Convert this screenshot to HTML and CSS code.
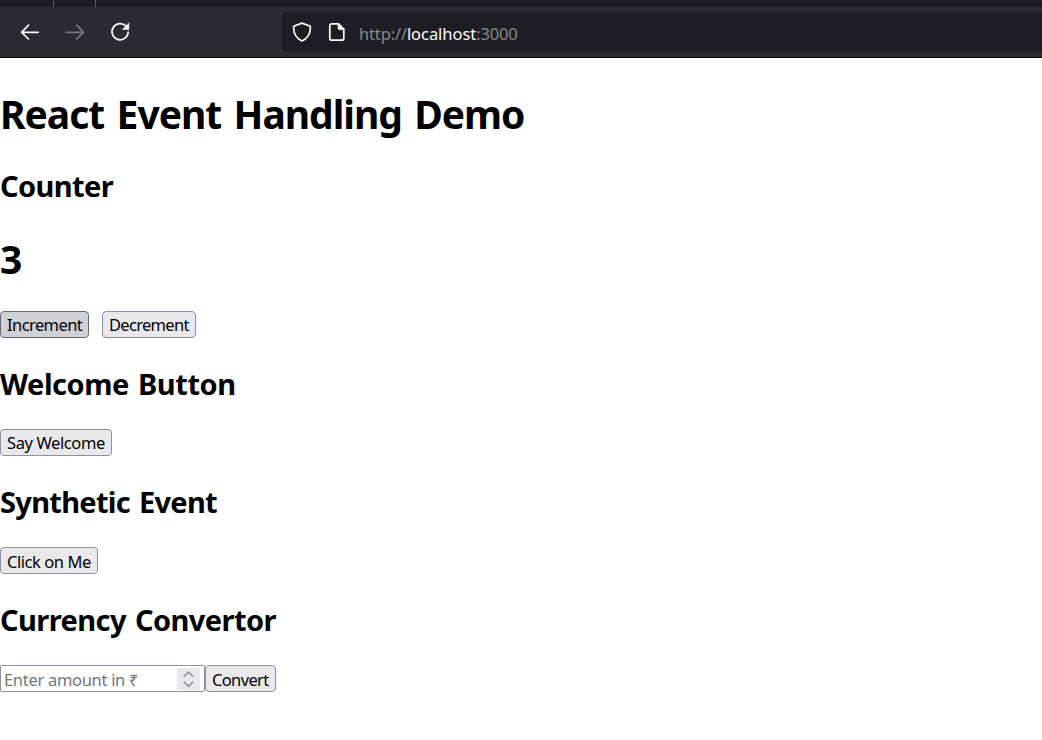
FILE: index.html
```html
<!DOCTYPE html>
<html lang="en">
<head>
<meta charset="utf-8">
<title>React Event Handling Demo</title>
<link rel="stylesheet" href="styles.css">
</head>
<body>
<header class="browser">
  <div class="tabstrip"><span class="tab-first"></span><span class="tab-second"></span></div>
  <div class="toolbar">
    <nav class="nav">
      <svg class="icon" viewBox="0 0 20 20"><path d="M18.2 10.3H1.8M8.5 3.2L1.6 10.3l6.9 6.7"/></svg>
      <svg class="icon icon-disabled" viewBox="0 0 20 20"><path d="M1.2 10.3h17M11.6 3.2l6.9 7.1-6.9 6.7"/></svg>
      <svg class="icon" viewBox="0 0 20 20"><path d="M16.1 4.2A8.1 8.1 0 1 0 18.2 10.2"/><path class="fill" d="M18.9 1v6.5h-6.2z"/></svg>
    </nav>
    <div class="urlbar">
      <svg class="icon" viewBox="0 0 20 20"><path d="M10 1.1L18.3 4.3V7C18.3 12 14.8 17 10 19C5.2 17 1.7 12 1.7 7V4.3z"/></svg>
      <svg class="icon icon-page" viewBox="0 0 20 20"><path d="M4.8 1.8h6.7l5.3 5.3v9.1a2 2 0 0 1-2 2h-10a2 2 0 0 1-2-2V3.8a2 2 0 0 1 2-2z"/><path class="fill" d="M11 1.2l6.5 6.5h-5a1.5 1.5 0 0 1-1.5-1.5z"/></svg>
      <span class="url">http://<b class="host">localhost</b>:3000</span>
    </div>
  </div>
</header>
<main class="page">
  <h1 class="title"><span class="t-title">React Event Handling Demo</span></h1>
  <h2 class="subtitle"><span class="t-counter">Counter</span></h2>
  <h1 class="title count"><span>3</span></h1>
  <div class="row row-gap">
    <button class="btn btn-increment"><span>Increment</span></button>
    <button class="btn btn-decrement"><span>Decrement</span></button>
  </div>
  <h2 class="subtitle"><span class="t-welcome">Welcome Button</span></h2>
  <div class="row"><button class="btn btn-welcome"><span>Say Welcome</span></button></div>
  <h2 class="subtitle"><span class="t-synthetic">Synthetic Event</span></h2>
  <div class="row"><button class="btn btn-click"><span>Click on Me</span></button></div>
  <h2 class="subtitle"><span class="t-currency">Currency Convertor</span></h2>
  <div class="row">
    <div class="amount">
      <span class="placeholder">Enter amount in ₹</span>
      <span class="spinner"><svg viewBox="0 0 23 22"><path d="M7.3 8.2l4.2-4.2 4.2 4.2M7.3 14.2l4.2 4.2 4.2-4.2"/></svg></span>
    </div>
    <button class="btn btn-convert"><span>Convert</span></button>
  </div>
</main>
</body>
</html>
```
FILE: styles.css
```css
* { box-sizing: border-box; }
body { margin: 0; background: #fff; color: #000; font-family: "Noto Sans", "Open Sans", sans-serif; overflow: hidden; }
.tabstrip { height: 7px; background: #1c1b22; display: flex; }
.tab-first { width: 54px; border-right: 1px solid #5b5a62; }
.tab-second { width: 42px; border-right: 1px solid #5b5a62; }
.toolbar { height: 51px; background: #2b2a33; border-bottom: 1px solid #0c0c0d; display: flex; }
.nav { width: 282px; padding: 15px 0 0 20px; display: flex; gap: 25px; }
.icon { width: 20px; height: 20px; flex: none; fill: none; stroke: #fbfbfe; stroke-width: 1.7; stroke-linecap: round; stroke-linejoin: round; }
.icon .fill { fill: #fbfbfe; stroke-width: .5; }
.icon-disabled { stroke: #7c7b82; }
.urlbar { flex: 1; height: 40px; margin-top: 5px; padding: 10px 0 0 10px; background: #1e1d24; border-radius: 5px 0 0 5px; display: flex; }
.icon-page { margin-left: 15px; }
.url { margin: 0 0 0 12px; font-size: 16.5px; line-height: 24px; color: #88878e; white-space: nowrap; letter-spacing: -.15px; }
.host { font-weight: 400; color: #fbfbfe; letter-spacing: -.05px; }
.page { padding-top: 28px; }
.title { margin: 0 0 24px; padding-top: 1px; font-size: 39px; line-height: 54px; font-weight: 700; white-space: nowrap; letter-spacing: -1.02px; word-spacing: 3.3px; }
.count { margin-bottom: 25px; }
.subtitle { margin: 0 0 25px; padding-top: 1px; font-size: 29px; line-height: 40px; font-weight: 700; white-space: nowrap; word-spacing: 2px; }
.t-counter { letter-spacing: -.6px; }
.t-welcome { letter-spacing: -.45px; }
.t-synthetic { letter-spacing: -.7px; }
.t-currency { letter-spacing: -.57px; }
.row { display: flex; height: 27px; margin-bottom: 25px; }
.row-gap { gap: 13px; }
.btn { height: 27px; padding: 0 0 0 6px; border: 1px solid #8f8f9d; border-radius: 4px; background: #e9e9ed; color: #000; font-family: inherit; font-size: 16.5px; line-height: 26px; text-align: left; white-space: nowrap; }
.btn-increment { width: 89px; background: #d0d0d7; border-color: #676774; letter-spacing: -.58px; }
.btn-decrement { width: 94px; letter-spacing: -.7px; }
.btn-welcome { width: 112px; letter-spacing: -.4px; }
.btn-click { width: 98px; padding-top: 1px; letter-spacing: -.45px; }
.btn-convert { width: 71px; padding-top: 1px; letter-spacing: -.65px; }
.amount { width: 205px; height: 27px; border: 1px solid #8f8f9d; border-radius: 2px; padding: 2px 4px 2px 3px; display: flex; justify-content: space-between; }
.placeholder { font-size: 16.5px; line-height: 24px; color: #757575; white-space: nowrap; letter-spacing: -.3px; }
.spinner { width: 23px; height: 22px; background: #e9e9ed; }
.spinner svg { display: block; width: 23px; height: 22px; fill: none; stroke: #8f8f9d; stroke-width: 1.6; stroke-linecap: round; stroke-linejoin: round; }
```
